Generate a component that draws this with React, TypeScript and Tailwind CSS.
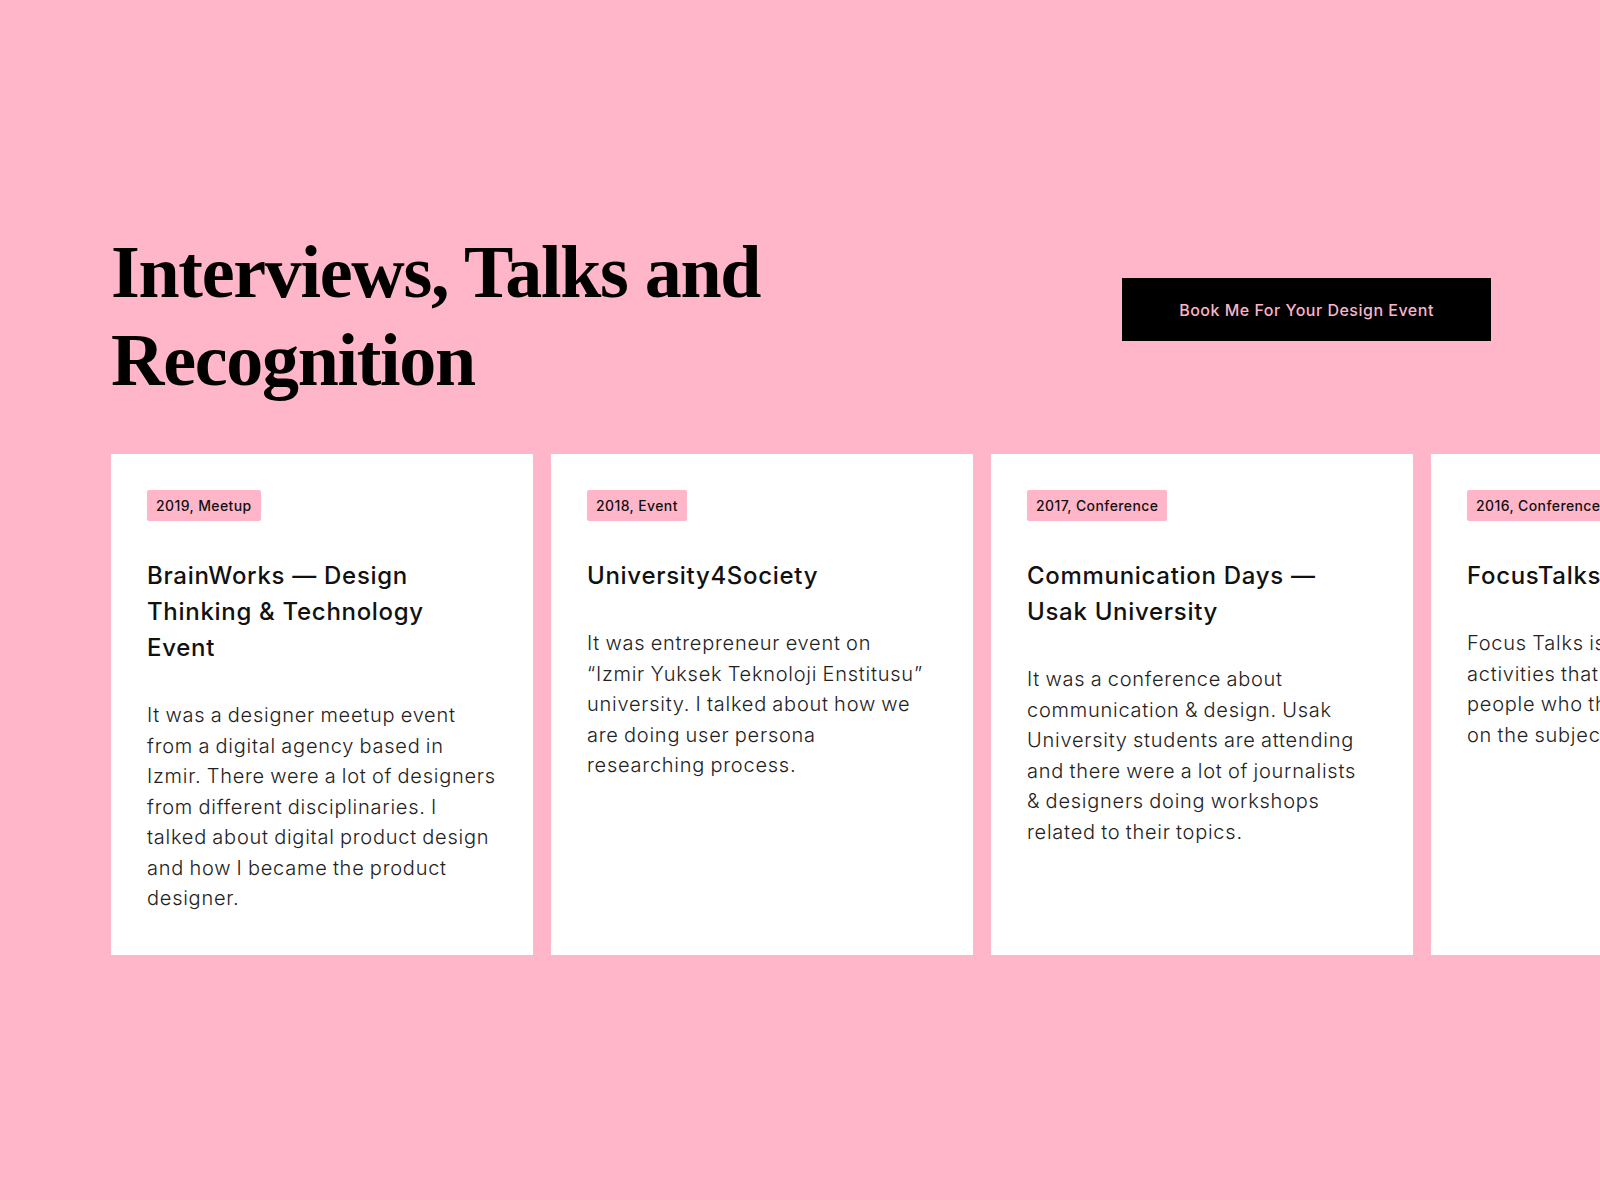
import React from 'react'

const events = [
  {
    tag: '2019, Meetup',
    title: ['BrainWorks — Design', 'Thinking & Technology', 'Event'],
    body: [
      'It was a designer meetup event',
      'from a digital agency based in',
      'Izmir. There were a lot of designers',
      'from different disciplinaries. I',
      'talked about digital product design',
      'and how I became the product',
      'designer.',
    ],
  },
  {
    tag: '2018, Event',
    title: ['University4Society'],
    body: [
      'It was entrepreneur event on',
      '“Izmir Yuksek Teknoloji Enstitusu”',
      'university. I talked about how we',
      'are doing user persona',
      'researching process.',
    ],
  },
  {
    tag: '2017, Conference',
    title: ['Communication Days —', 'Usak University'],
    body: [
      'It was a conference about',
      'communication & design. Usak',
      'University students are attending',
      'and there were a lot of journalists',
      '& designers doing workshops',
      'related to their topics.',
    ],
  },
  {
    tag: '2016, Conference',
    title: ['FocusTalks Izmir'],
    body: [
      'Focus Talks is a series of',
      'activities that bring together',
      'people who think and speak',
      'on the subject of design.',
    ],
  },
]

function EventCard({ tag, title, body }: { tag: string; title: string[]; body: string[] }) {
  return (
    <div className="w-[422px] h-[501px] shrink-0 bg-white p-9">
      <span className="inline-block bg-[#ffb6c9] rounded-[2px] px-[9px] h-[31px] leading-[31px] text-[14px] font-medium tracking-[0.4px] text-[#111]">
        {tag}
      </span>
      <h3 className="mt-[37px] text-[24px] leading-[36px] font-medium text-[#111] tracking-[0.7px]">
        {title.map((line) => (
          <span key={line} className="block whitespace-nowrap">
            {line}
          </span>
        ))}
      </h3>
      <p className="mt-[34px] text-[20px] leading-[30.5px] font-light text-[#222] tracking-[0.75px] [word-spacing:-1px]">
        {body.map((line) => (
          <span key={line} className="block whitespace-nowrap">
            {line}
          </span>
        ))}
      </p>
    </div>
  )
}

export default function App() {
  return (
    <div
      className="min-h-screen w-full overflow-hidden bg-[#ffb6c9]"
      style={{ fontFamily: 'Inter, "Noto Sans", sans-serif' }}
    >
      <div className="pt-[228px] pl-[111px] pr-[109px] flex justify-between items-start">
        <h2
          className="text-[74px] leading-[88px] font-bold text-black tracking-[-1.3px]"
          style={{ fontFamily: '"Liberation Serif", "DejaVu Serif", serif' }}
        >
          Interviews, Talks and
          <br />
          Recognition
        </h2>
        <button className="mt-[50px] w-[369px] h-[63px] bg-black text-[#f7b5c7] text-[16px] font-medium tracking-[0.5px]">
          Book Me For Your Design Event
        </button>
      </div>
      <div className="mt-[50px] pl-[111px] flex gap-[18px] pb-[245px]">
        {events.map((e) => (
          <EventCard key={e.tag} {...e} />
        ))}
      </div>
    </div>
  )
}
